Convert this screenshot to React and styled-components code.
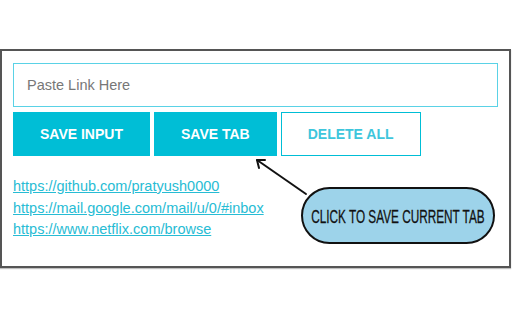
import React from "react";
import styled, { createGlobalStyle } from "styled-components";

const Global = createGlobalStyle`
  html, body { margin: 0; padding: 0; background: #fff; }
  body { font-family: "Liberation Sans", Arial, sans-serif; }
  * { box-sizing: border-box; }
`;

const Page = styled.div`
  width: 512px;
  height: 320px;
  padding-top: 49px;
  position: relative;
  overflow: hidden;
`;

const Frame = styled.div`
  width: 511px;
  height: 219px;
  border: 2px solid #555;
  box-shadow: 0 1px 1px rgba(0,0,0,0.25);
  padding: 12px 11px;
  position: relative;
`;

const Input = styled.input`
  display: block;
  width: 100%;
  height: 44px;
  border: 1px solid #5ad2e6;
  padding: 0 13px;
  font-family: "Liberation Sans", Arial, sans-serif;
  font-size: 14.5px;
  color: #333;
  outline: none;
  &::placeholder { color: #777; }
`;

const ButtonRow = styled.div`
  display: flex;
  gap: 4px;
  margin-top: 5px;
`;

const Button = styled.button`
  height: 44px;
  padding: 0 26px;
  border: 1px solid #00bed6;
  background: ${p => (p.$outline ? "#fff" : "#00bed6")};
  color: ${p => (p.$outline ? "#3ec6dc" : "#fff")};
  font-family: "Liberation Sans", Arial, sans-serif;
  font-weight: bold;
  font-size: 14px;
  cursor: pointer;
`;

const LinkList = styled.ul`
  list-style: none;
  margin: 20px 0 0 0;
  padding: 0;
`;

const LinkItem = styled.li`
  line-height: 21.5px;
  font-size: 14.5px;
`;

const Link = styled.a`
  color: #27bcd4;
  text-decoration: underline;
`;

const Callout = styled.div`
  position: absolute;
  left: 301px;
  top: 187px;
  width: 194px;
  height: 57px;
  border: 2px solid #111;
  border-radius: 29px;
  background: #9dd3ea;
  display: flex;
  align-items: center;
  justify-content: center;
  color: #111;
  white-space: nowrap;
`;

const CalloutText = styled.span`
  display: inline-block;
  font-family: "Liberation Sans", Arial, sans-serif;
  font-size: 19px;
  transform: scaleX(0.62);
  transform-origin: center;
  -webkit-text-stroke: 0.3px #111;
  margin-top: 2px;
`;

const Arrow = styled.svg`
  position: absolute;
  left: 250px;
  top: 150px;
  overflow: visible;
`;

export default function App() {
  return (
    <>
      <Global />
      <Page>
        <Frame>
          <Input placeholder="Paste Link Here" />
          <ButtonRow>
            <Button>SAVE INPUT</Button>
            <Button>SAVE TAB</Button>
            <Button $outline>DELETE ALL</Button>
          </ButtonRow>
          <LinkList>
            <LinkItem><Link href="#">https://github.com/pratyush0000</Link></LinkItem>
            <LinkItem><Link href="#">https://mail.google.com/mail/u/0/#inbox</Link></LinkItem>
            <LinkItem><Link href="#">https://www.netflix.com/browse</Link></LinkItem>
          </LinkList>
        </Frame>
        <Arrow width="60" height="50" viewBox="0 0 60 50">
          <path d="M56 44 L7 10" stroke="#111" strokeWidth="2" fill="none" strokeLinecap="round" />
          <path d="M15 10 L7 10 L9 18" stroke="#111" strokeWidth="2" fill="none" strokeLinecap="round" strokeLinejoin="round" />
        </Arrow>
        <Callout><CalloutText>CLICK TO SAVE CURRENT TAB</CalloutText></Callout>
      </Page>
    </>
  );
}
